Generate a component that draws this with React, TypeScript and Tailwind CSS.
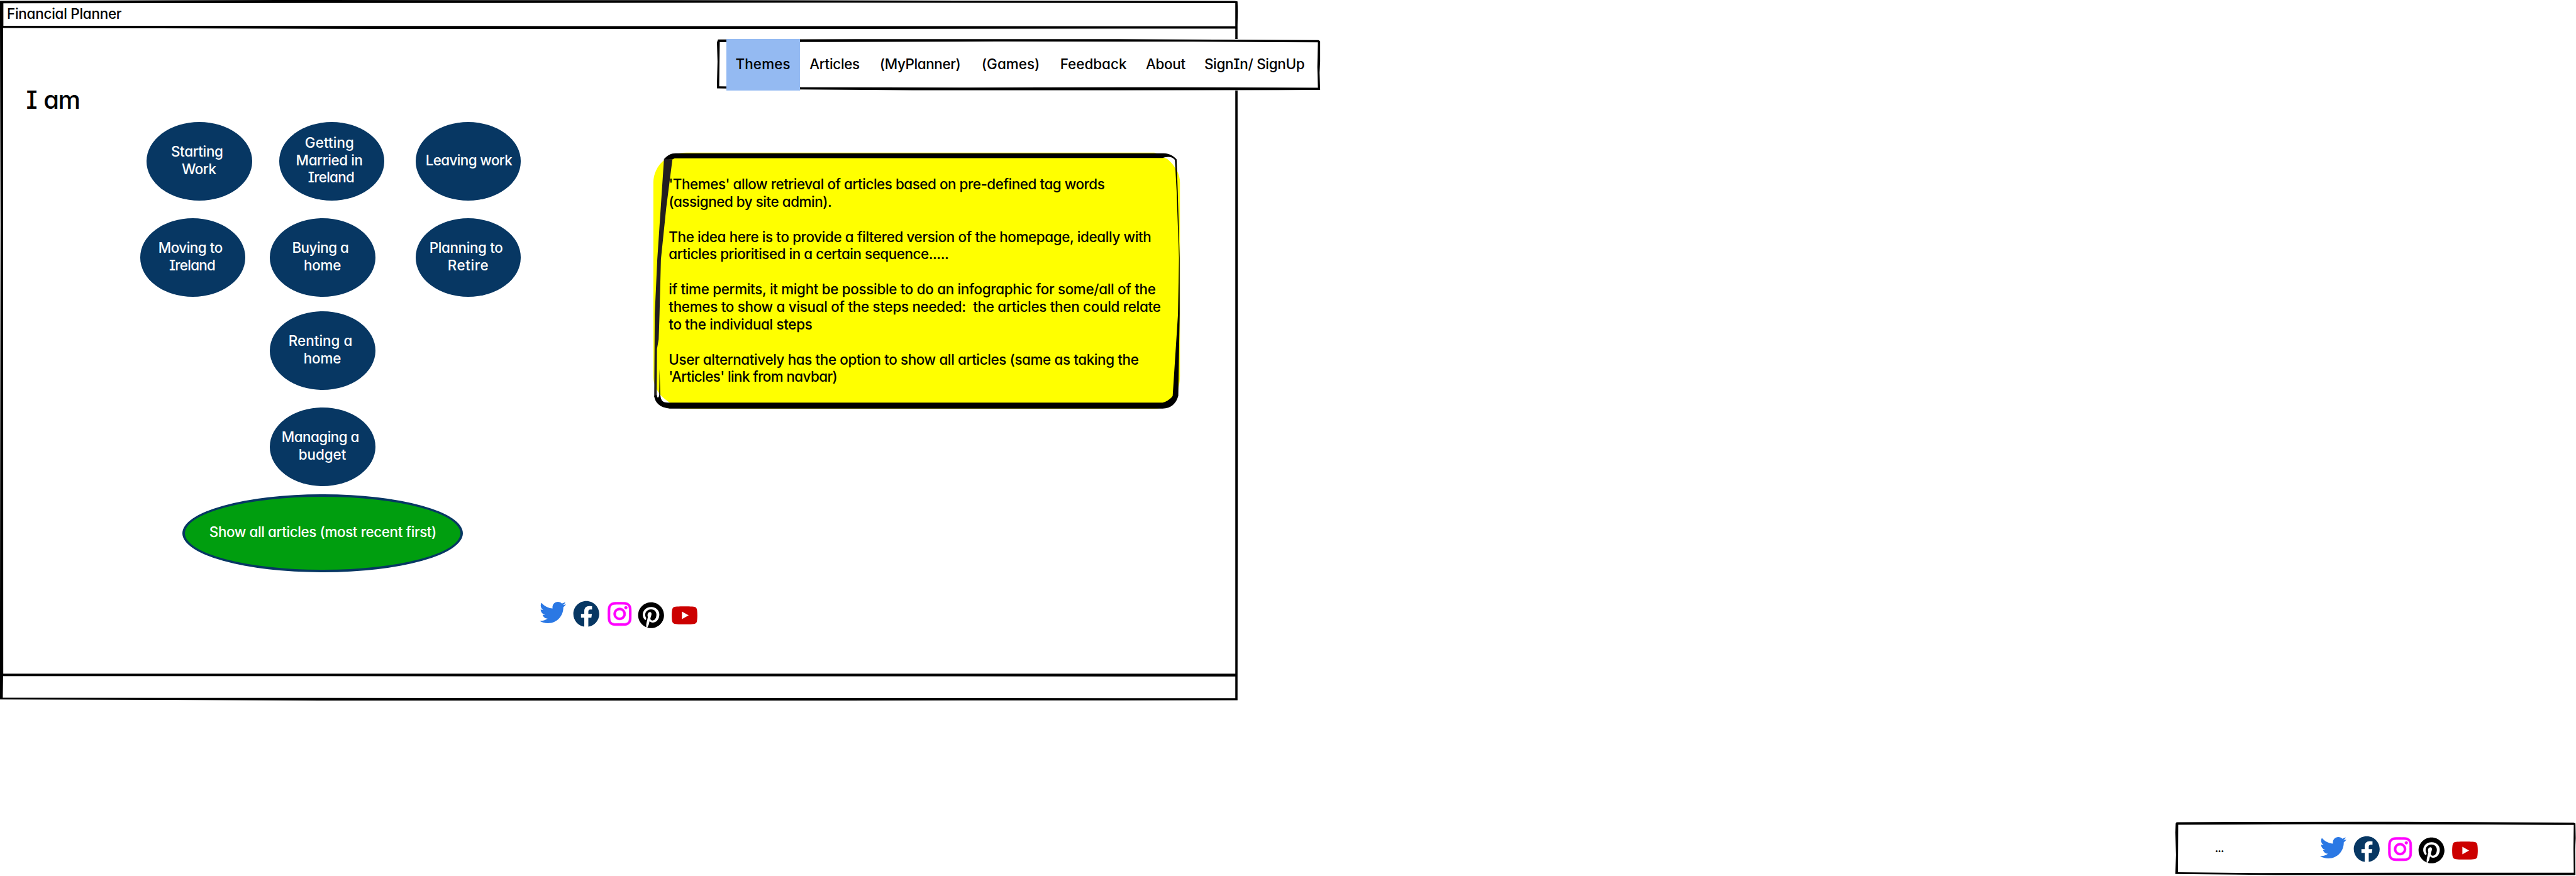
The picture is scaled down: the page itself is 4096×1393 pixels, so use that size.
import { useLayoutEffect, useRef } from "react";
import { FaTwitter, FaFacebook, FaInstagram, FaPinterest, FaYoutube } from "react-icons/fa";

/* One line of lettering whose tracking is adjusted to fill a given width. */
function Fit({ text, width, className = "" }: { text: string; width: number; className?: string }) {
  const ref = useRef<HTMLSpanElement>(null);
  useLayoutEffect(() => {
    const el = ref.current;
    if (!el) return;
    el.style.letterSpacing = "0px";
    el.style.marginRight = "0px";
    const natural = el.getBoundingClientRect().width;
    const spacing = (width + 2.5 - natural) / Math.max(1, text.length - 1);
    el.style.letterSpacing = `${spacing}px`;
    el.style.marginRight = `${-spacing}px`;
  }, [text, width]);
  return (
    <span className={`block whitespace-pre ${className}`}>
      <span ref={ref} className="-ml-px inline-block whitespace-pre">
        {text}
      </span>
    </span>
  );
}

type Line = [string, number];

function Theme({ lines, className = "" }: { lines: Line[]; className?: string }) {
  return (
    <button
      className={`flex h-[124.7px] w-[167.5px] shrink-0 flex-col items-center justify-center rounded-[50%] bg-[#073763] pb-[4px] text-white ${className}`}
    >
      {lines.map(([text, width], i) => (
        <Fit key={i} text={text} width={width} className={i < lines.length - 1 ? "pr-[6px]" : ""} />
      ))}
    </button>
  );
}

function Socials({ className = "" }: { className?: string }) {
  return (
    <div className={`flex items-start ${className}`}>
      <FaTwitter className="size-[42px] shrink-0 text-[#2b78e4]" />
      <FaFacebook className="ml-[11px] mt-[2px] size-[42.5px] shrink-0 text-[#073763]" />
      <FaInstagram className="ml-[10.5px] mt-[2px] size-[42.5px] shrink-0 stroke-[#ff00ff] [stroke-width:9] text-[#ff00ff]" />
      <FaPinterest className="ml-[7.5px] mt-[4px] size-[42.5px] shrink-0 text-black" />
      <FaYoutube className="ml-[10.5px] mt-[4px] size-[43px] shrink-0 text-[#cc0000]" />
    </div>
  );
}

const navItems: { text: string; width: number; gap: string }[] = [
  { text: "Articles", width: 77.5, gap: "ml-[15.8px]" },
  { text: "(MyPlanner)", width: 126.5, gap: "ml-[32.5px]" },
  { text: "(Games)", width: 90, gap: "ml-[34px]" },
  { text: "Feedback", width: 103.3, gap: "ml-[33.3px]" },
  { text: "About", width: 60.6, gap: "ml-[31.5px]" },
  { text: "SignIn/ SignUp", width: 157.3, gap: "ml-[30.9px]" },
];

const note: Line[] = [
  ["'Themes' allow retrieval of articles based on pre-defined tag words", 691],
  ["(assigned by site admin).", 257],
  ["", 0],
  ["The idea here is to provide a filtered version of the homepage, ideally with", 765],
  ["articles prioritised in a certain sequence.....", 443],
  ["", 0],
  ["if time permits, it might be possible to do an infographic for some/all of the", 772],
  ["themes to show a visual of the steps needed:  the articles then could relate", 780],
  ["to the individual steps", 226],
  ["", 0],
  ["User alternatively has the option to show all articles (same as taking the", 745],
  ["'Articles' link from navbar)", 266],
];

function NavBar() {
  return (
    <nav className="absolute left-[1140.3px] top-[62.4px] flex h-[82px] w-[960px] items-stretch bg-white">
      <svg className="absolute inset-0 size-full overflow-visible" viewBox="0 0 1078 92" preserveAspectRatio="none">
        <path d="M2 0.8 L250 0.2 L700 0.3 L1074 2 L1077 4 L1077 40 L1076 60 L1077 91 L1072 91 L700 91.5 L350 91.5 L120 90 L0 88 L0 80 L1 40 L0 6 Z M5 5.5 L4 84.5 L150 86 L450 86.8 L800 86 L1073 87 L1072 50 L1073 6 L850 4.8 L500 4.6 L200 5.4 Z" fillRule="evenodd" />
      </svg>
      <div className="relative ml-[14.3px] flex w-[117.8px] items-center justify-center bg-[#94baf2] pb-[2px]">
        <Fit text="Themes" width={84.6} />
      </div>
      {navItems.map((item) => (
        <div key={item.text} className={`relative flex items-center pb-[2px] ${item.gap}`}>
          <Fit text={item.text} width={item.width} />
        </div>
      ))}
    </nav>
  );
}

function StickyNote() {
  return (
    <aside className="relative h-[410px] w-[840px]">
      <svg className="absolute inset-0 size-full overflow-visible" viewBox="1165 270 943 460" preserveAspectRatio="none">
        <path d="M1166 325 C1166 300 1186 272 1225 272 L2060 272 C2090 280 2106 305 2106 325 L2106 670 C2106 700 2090 729 2060 729 L1215 729 C1187 715 1166 700 1166 670 Z" fill="#ffff00" />
        <path d="M2076 281 C2088 281 2099 300 2099 305 L2098 283 C2092 277 2084 277 2076 281 Z M1172 694 C1176 704 1184 716 1192 718 L1178 720 L1170 708 Z" fill="#ffffff" />
        <path d="M1185 283 L1200 284 L1189 370 L1179.5 462 L1177 560 L1175.5 605 L1172.5 622 L1172 708 L1167.5 708 L1168.5 560 L1173 462 Z" fill="#231f20" />
        <path d="M1185 283.5 C1192 276 1197 273 1206 273 L2077 273 C2088 273 2096 279 2100 284 L2102 340 L2105.5 460 L2105.5 560 L2103 706 C2099 720 2090 728.5 2075 728.5 L1195 728.5 C1178 727 1169 719 1167.5 706 L1172 704 C1173 712 1176 709 1176.5 704 L1177 658 L1178.3 700 C1178.5 714 1182 718 1192 718 L2075 718 C2083 716 2090 711 2093 706 L2102.5 560 L2104.3 460 L2100 340 L2097 285 C2091 278 2083 279 2075 281.5 L1204 282 L1200 284 Z" />
      </svg>
      <div className="relative pl-[26.5px] pt-[38.5px]">
        {note.map(([text, width], i) => (
          <div key={i} className="h-[27.87px]">
            {text && <Fit text={text} width={width} />}
          </div>
        ))}
      </div>
    </aside>
  );
}

export default function App() {
  return (
    <div className="flex h-[1393px] w-[4096px] flex-col overflow-hidden bg-white font-['Inter',sans-serif] text-[22.4px] font-medium leading-[27.87px] text-black [font-feature-settings:'cv11','cv08']">
      <section className="relative flex h-[1114px] w-[1970px] flex-col">
        <svg className="absolute inset-0 size-full" viewBox="0 0 2211.5 1250.5" preserveAspectRatio="none">
          <path d="M0 1.5 L500 0 L1200 0.3 L2204 1.8 L2209 2.5 L2209.5 20 L2209 45 L2209.5 700 L2209 1250 L1500 1250.5 L600 1250.5 L0 1248.5 L0 1100 L1 400 L0 40 Z M6 5.8 L6 46 L1000 46.5 L2205 46.8 L2205 5.7 L1500 4.8 L900 5.2 Z M5.5 50 L5.8 1202.5 L2205 1202.5 L2205 51 L1500 51.5 L700 51.5 Z M5.5 1207 L5 1245.5 L900 1246 L2205 1246.2 L2205 1207.5 L1200 1207.2 Z" fillRule="evenodd" />
        </svg>
        <header className="relative h-[43px] pl-[12px] pt-[8.3px]">
          <Fit text="Financial Planner" width={180} />
        </header>
        <main className="relative flex h-[1030px]">
          <div className="w-[1037.8px] shrink-0">
            <h1 className="ml-[42.5px] pt-[91px] text-[40px] leading-[50px] [word-spacing:2px]">
              <Fit text="I am" width={84} />
            </h1>
            <div className="ml-[233.2px] mt-[10.2px] flex">
              <Theme lines={[["Starting", 80.5], ["Work", 52.5]]} />
              <Theme className="ml-[42.9px]" lines={[["Getting", 75.5], ["Married in", 104], ["Ireland", 71.5]]} />
              <Theme className="ml-[49.9px] pl-[3px]" lines={[["Leaving work", 135.5]]} />
            </div>
            <div className="ml-[222.7px] mt-[28.5px] flex">
              <Theme lines={[["Moving to", 100], ["Ireland", 71.5]]} />
              <Theme className="ml-[39.2px]" lines={[["Buying a", 88], ["home", 57]]} />
              <Theme className="ml-[64.1px]" lines={[["Planning to", 114.5], ["Retire", 62.5]]} />
            </div>
            <div className="ml-[290.4px] mt-[23.2px] flex w-[445.4px] flex-col items-center">
              <Theme lines={[["Renting a", 99], ["home", 57]]} />
              <Theme className="mt-[28.5px]" lines={[["Managing a", 121], ["budget", 73]]} />
              <button className="mt-[12.5px] flex h-[124.7px] w-full items-center justify-center rounded-[50%] border-4 border-[#073763] bg-[#009e0f] pb-[5px] pl-[2px] text-white">
                <Fit text="Show all articles (most recent first)" width={359} />
              </button>
            </div>
            <Socials className="ml-[857.6px] mt-[42.6px]" />
          </div>
          <div className="pt-[197.5px]">
            <StickyNote />
          </div>
        </main>
        <NavBar />
      </section>
      <footer className="relative ml-[3458.7px] mt-[192px] flex h-[86px] w-[637px] items-start">
        <svg className="absolute inset-0 size-full" viewBox="0 0 715 96.5" preserveAspectRatio="none">
          <path d="M2 1.8 L130 1 L350 0.8 L530 1.5 L711 2.5 L714 4 L714.5 30 L713.5 50 L714 96 L600 96 L180 96 L0 94 L1 60 L0 20 L0.5 4 Z M5 6.2 L4.5 91 L150 92.3 L400 91.8 L711 91.8 L710.5 50 L711 6.5 L560 6 L250 5.3 Z" fillRule="evenodd" />
        </svg>
        <div className="relative ml-[64px] mt-[28.5px] w-[12px] text-[18px] font-semibold">
          <Fit text="..." width={12.5} />
        </div>
        <Socials className="relative ml-[154px] mt-[20.5px]" />
      </footer>
    </div>
  );
}
